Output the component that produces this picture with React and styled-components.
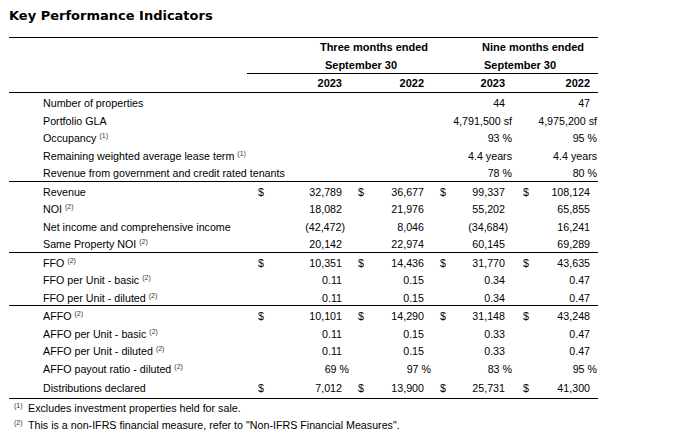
import React from 'react';
import styled, { createGlobalStyle } from 'styled-components';

const GlobalStyle = createGlobalStyle`
  html, body { margin: 0; padding: 0; background: #fff; }
  body { color: #000; font-family: "Liberation Sans", Arial, sans-serif; }
`;

const Page = styled.div`
  padding: 8px 0 0 9px;
  width: 589px;
`;

const Title = styled.h2`
  margin: 0 0 13px;
  font: bold 13px/16px "DejaVu Sans", Verdana, sans-serif;
  color: #000;
`;

const Table = styled.table`
  width: 589px;
  table-layout: fixed;
  border-collapse: separate;
  border-spacing: 0;
  border-top: 1px solid #000;
  font-size: 10.7px;
`;

const HeadCell = styled.th`
  box-sizing: border-box;
  height: ${(p) => p.$h}px;
  padding: ${(p) => p.$pad || '0'};
  font-size: 11px;
  font-weight: bold;
  text-align: ${(p) => p.$align || 'center'};
  white-space: nowrap;
  vertical-align: middle;
  border-bottom: ${(p) => (p.$rule ? '1px solid #000' : 'none')};
`;

const Cell = styled.td`
  box-sizing: border-box;
  height: ${(p) => p.$h}px;
  padding: 3px 0 0;
  white-space: nowrap;
  vertical-align: middle;
  border-bottom: ${(p) => (p.$rule ? '1px solid #000' : 'none')};
`;

const LabelCell = styled(Cell)`
  padding-left: 34px;
  text-align: left;
`;

const DollarCell = styled(Cell)`
  padding-left: ${(p) => p.$inset}px;
  text-align: left;
`;

const NumCell = styled(Cell)`
  text-align: right;
  padding-right: ${(p) => (p.$suffix ? 1 : p.$neg ? 5 : 8)}px;
`;

const Note = styled.sup`
  font-size: 7px;
  line-height: 0;
  vertical-align: 4px;
  margin-left: 3px;
  color: #333;
`;

const Footnotes = styled.div`
  margin-top: 1px;
  font-size: 10.7px;
`;

const Footnote = styled.div`
  height: 17px;
  line-height: 17px;
  padding-left: 5px;
  white-space: nowrap;
`;

const FootMark = styled.sup`
  display: inline-block;
  width: 14px;
  font-size: 7px;
  line-height: 0;
  vertical-align: 4px;
  color: #333;
`;

const COLS = [238, 53, 50, 20, 62, 20, 61, 20, 65];
const INSETS = [11, 8, 8, 10];

const rows = [
  { label: 'Number of properties', values: [null, null, '44', '47'] },
  { label: 'Portfolio GLA', values: [null, null, '4,791,500 sf', '4,975,200 sf'], suffix: true },
  { label: 'Occupancy', note: '(1)', values: [null, null, '93 %', '95 %'], suffix: true },
  { label: 'Remaining weighted average lease term', note: '(1)', values: [null, null, '4.4 years', '4.4 years'], suffix: true },
  { label: 'Revenue from government and credit rated tenants', values: [null, null, '78 %', '80 %'], suffix: true, rule: true },
  { label: 'Revenue', dollar: true, values: ['32,789', '36,677', '99,337', '108,124'] },
  { label: 'NOI', note: '(2)', values: ['18,082', '21,976', '55,202', '65,855'] },
  { label: 'Net income and comprehensive income', values: ['(42,472)', '8,046', '(34,684)', '16,241'] },
  { label: 'Same Property NOI', note: '(2)', values: ['20,142', '22,974', '60,145', '69,289'], rule: true },
  { label: 'FFO', note: '(2)', dollar: true, values: ['10,351', '14,436', '31,770', '43,635'] },
  { label: 'FFO per Unit - basic', note: '(2)', values: ['0.11', '0.15', '0.34', '0.47'] },
  { label: 'FFO per Unit - diluted', note: '(2)', values: ['0.11', '0.15', '0.34', '0.47'], rule: true },
  { label: 'AFFO', note: '(2)', dollar: true, values: ['10,101', '14,290', '31,148', '43,248'] },
  { label: 'AFFO per Unit - basic', note: '(2)', values: ['0.11', '0.15', '0.33', '0.47'] },
  { label: 'AFFO per Unit - diluted', note: '(2)', values: ['0.11', '0.15', '0.33', '0.47'] },
  { label: 'AFFO payout ratio - diluted', note: '(2)', values: ['69 %', '97 %', '83 %', '95 %'], suffix: true },
  { label: 'Distributions declared', dollar: true, values: ['7,012', '13,900', '25,731', '41,300'], rule: true, last: true },
];

function rowHeight(r) {
  if (r.last) return 22.5;
  return r.rule ? 18.5 : 17.5;
}

function DataRow({ r }) {
  const h = rowHeight(r);
  const cells = [];
  r.values.forEach((v, i) => {
    cells.push(
      <DollarCell key={`d${i}`} $h={h} $rule={r.rule} $inset={INSETS[i]}>
        {r.dollar ? '$' : ''}
      </DollarCell>
    );
    cells.push(
      <NumCell
        key={`n${i}`}
        $h={h}
        $rule={r.rule}
        $suffix={r.suffix}
        $neg={v && v.startsWith('(')}
      >
        {v || ''}
      </NumCell>
    );
  });
  return (
    <tr>
      <LabelCell $h={h} $rule={r.rule}>
        {r.label}
        {r.note && <Note>{r.note}</Note>}
      </LabelCell>
      {cells}
    </tr>
  );
}

export default function App() {
  const years = ['2023', '2022', '2023', '2022'];
  return (
    <Page>
      <GlobalStyle />
      <Title>Key Performance Indicators</Title>
      <Table>
        <colgroup>
          {COLS.map((w, i) => (
            <col key={i} style={{ width: w }} />
          ))}
        </colgroup>
        <thead>
          <tr>
            <HeadCell $h={18} colSpan={2} />
            <HeadCell $h={18} colSpan={3} $pad="0 0 0 16px">Three months ended</HeadCell>
            <HeadCell $h={18} />
            <HeadCell $h={18} colSpan={3} $pad="0 0 0 16px">Nine months ended</HeadCell>
          </tr>
          <tr>
            <HeadCell $h={18} />
            <HeadCell $h={18} $rule />
            <HeadCell $h={18} $rule colSpan={3} $pad="1px 26px 0 16px">September 30</HeadCell>
            <HeadCell $h={18} $rule />
            <HeadCell $h={18} $rule colSpan={3} $pad="1px 26px 0 16px">September 30</HeadCell>
          </tr>
          <tr>
            <HeadCell $h={19} $rule />
            {years.map((y, i) => (
              <React.Fragment key={i}>
                <HeadCell $h={19} $rule />
                <HeadCell $h={19} $rule $align="right" $pad="0 8px 0 0">{y}</HeadCell>
              </React.Fragment>
            ))}
          </tr>
        </thead>
        <tbody>
          {rows.map((r, i) => (
            <DataRow key={i} r={r} />
          ))}
        </tbody>
      </Table>
      <Footnotes>
        <Footnote>
          <FootMark>(1)</FootMark>Excludes investment properties held for sale.
        </Footnote>
        <Footnote>
          <FootMark>(2)</FootMark>This is a non-IFRS financial measure, refer to "Non-IFRS Financial Measures".
        </Footnote>
      </Footnotes>
    </Page>
  );
}
